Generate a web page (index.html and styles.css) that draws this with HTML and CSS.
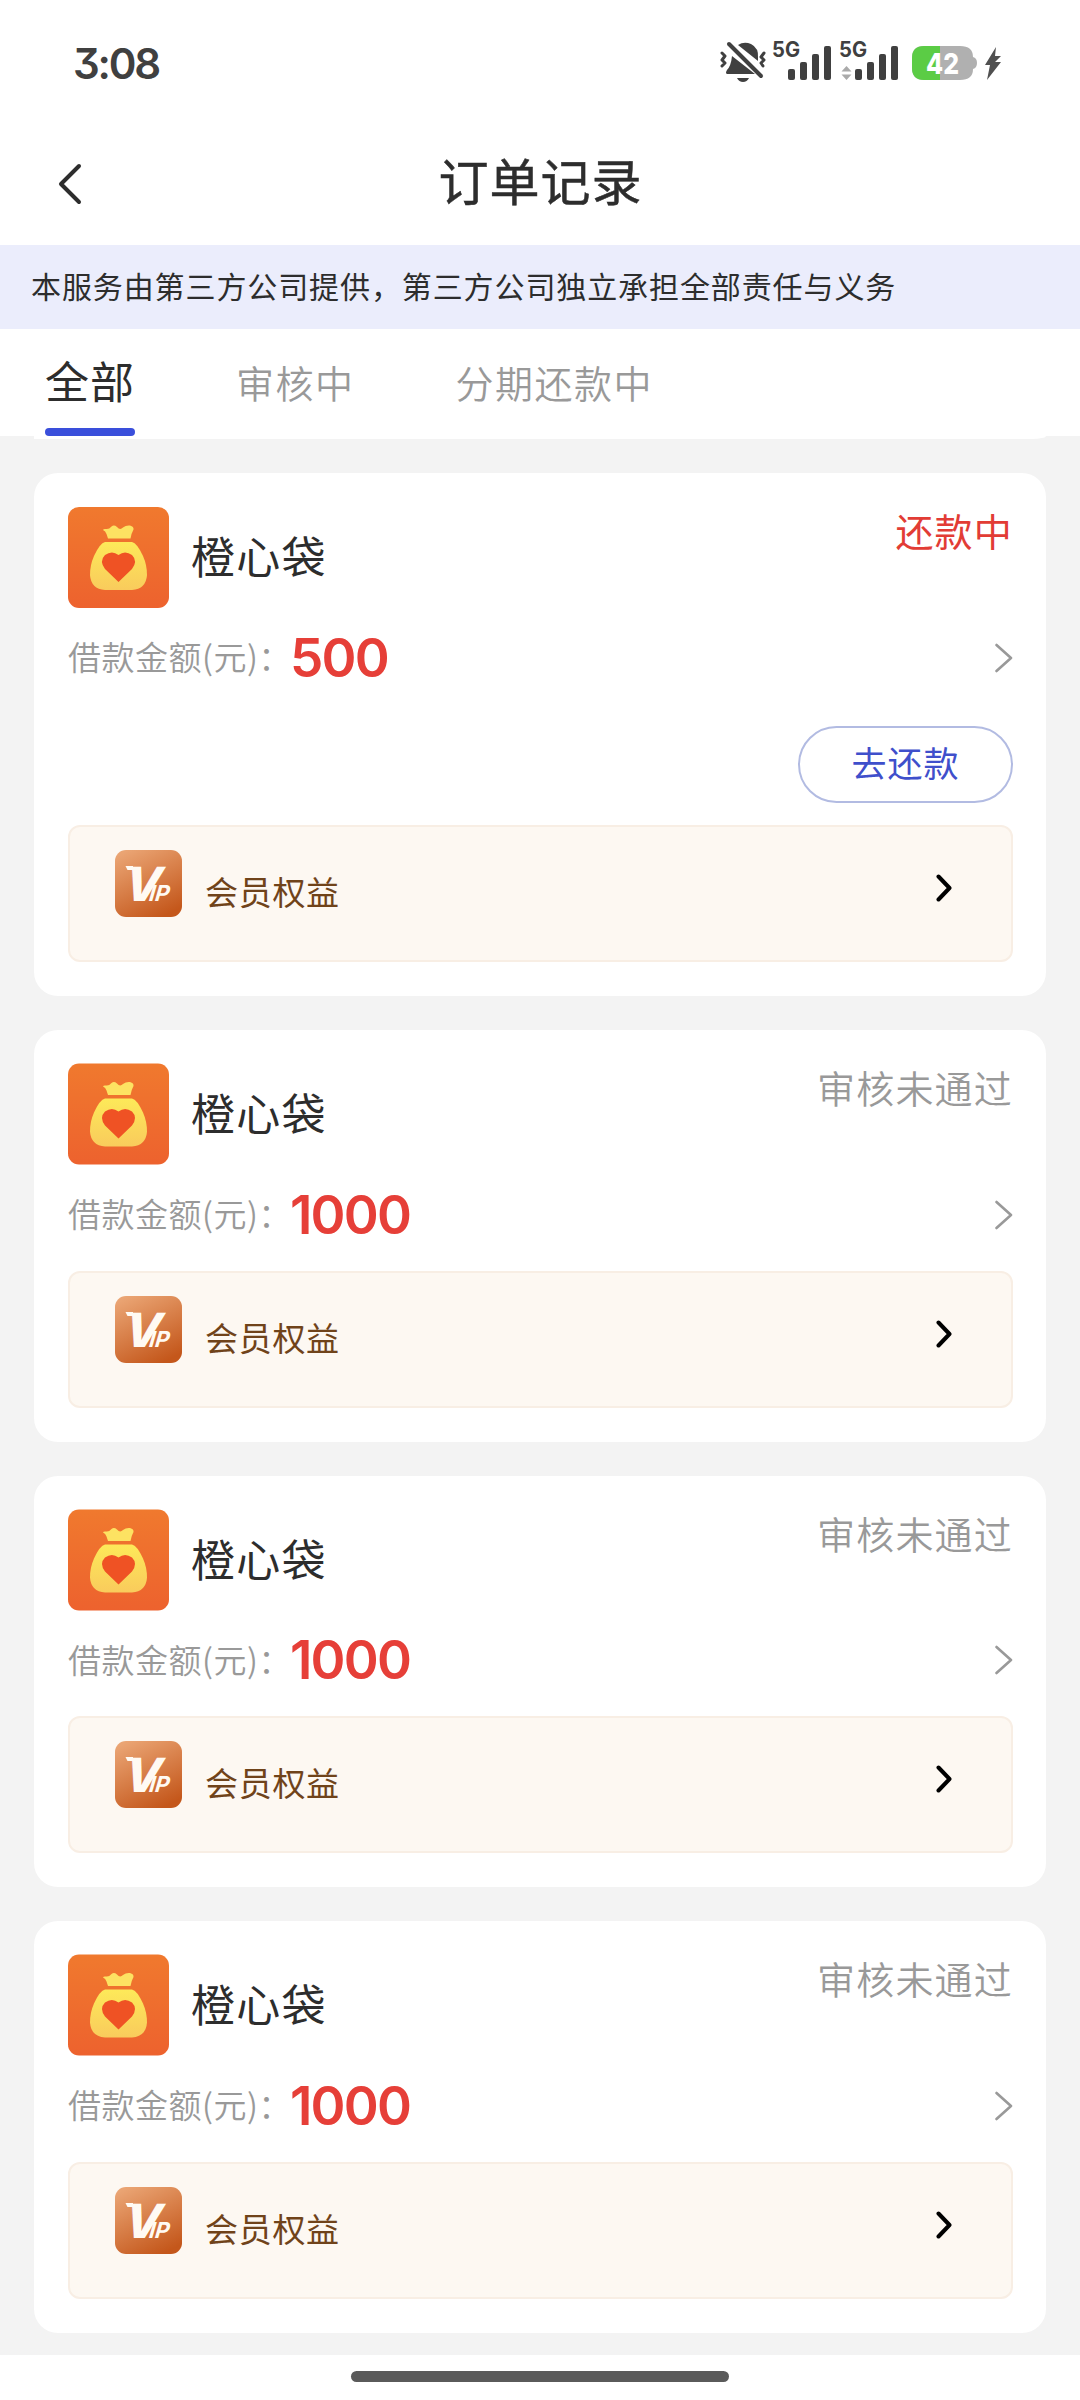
FILE: index.html
```html
<!DOCTYPE html>
<html lang="zh-CN">
<head>
<meta charset="utf-8">
<title>订单记录</title>
<link rel="stylesheet" href="styles.css">
</head>
<body>
<svg class="defs" width="0" height="0" aria-hidden="true">
  <defs>
    <linearGradient id="orange" x1="0" y1="0" x2="0" y2="1"><stop offset="0" stop-color="#f0792e"/><stop offset="1" stop-color="#ed622e"/></linearGradient>
    <linearGradient id="gold" x1="0" y1="0" x2="0" y2="1"><stop offset="0" stop-color="#fde959"/><stop offset="1" stop-color="#f9cb5c"/></linearGradient>
    <linearGradient id="bronze" x1="0.2" y1="0" x2="0.7" y2="1"><stop offset="0" stop-color="#eaa473"/><stop offset="1" stop-color="#c4571b"/></linearGradient>
  </defs>
  <symbol id="bag" viewBox="0 0 101 101">
    <rect width="101" height="101" rx="11" fill="url(#orange)"/>
    <path d="M40 31.500 38.500 27 Q37.500 24 35 23 Q35.500 21.500 38 22 Q41 22.500 43.500 19.500 Q46 17.500 49 20 Q52 23.500 55 20.500 Q58 18 62 18.500 Q66 19.500 65.500 22.500 Q63.500 26 62.500 31.500Z" fill="#fde262"/>
    <path d="M37 35H64Q69 36 75 49Q79 58 79 68Q78 82 64 83H37Q23 82 22 68Q22 58 26 49Q32 36 37 35Z" fill="url(#gold)"/>
    <path d="M50.500 75 37 62Q31 54 37 48Q44 43 50.500 48Q57 43 64 48Q70 54 64 62Z" fill="#ef5224"/>
  </symbol>
  <symbol id="next" viewBox="0 0 18 30"><path d="M1.500 2 16 15 1.500 28" fill="none" stroke="#999" stroke-width="2.600" stroke-linecap="round" stroke-linejoin="round"/></symbol>
  <symbol id="more" viewBox="0 0 16 28"><path d="M2.500 2.500 13.500 14 2.500 25.500" fill="none" stroke="#000" stroke-width="4" stroke-linecap="round" stroke-linejoin="round"/></symbol>
  <symbol id="bars" viewBox="0 0 44 34">
    <g fill="#404040"><rect y="23" width="7" height="11" rx="2"/><rect x="12" y="16" width="7" height="18" rx="2"/><rect x="24" y="8" width="7" height="26" rx="2"/><rect x="36" width="7" height="34" rx="2"/></g>
  </symbol>
</svg>

<header class="status-bar">
  <span class="time">3:08</span>
  <svg class="status-icons" viewBox="0 0 290 44" width="290" height="44">
    <g fill="#404040">
      <path d="M18 5Q24 1 31 4Q39 8 38 18V21Z"/>
      <path d="M12 16 35 34H7Q5 33 7 30Q11 26 12 16Z"/>
      <path d="M17 38H29Q27 42 23 42Q19 42 17 38Z"/>
    </g>
    <g fill="none" stroke="#404040" stroke-linecap="round" stroke-linejoin="round">
      <path d="M9 4 41 36" stroke-width="4"/>
      <path d="M2 13 5 16 2 20 5 23 2 26M44 13 41 17 44 20 41 23 43 26" stroke-width="3"/>
    </g>
    <g class="net" fill="#404040"><text x="52" y="17" textLength="28" lengthAdjust="spacingAndGlyphs">5G</text><text x="119" y="17" textLength="28" lengthAdjust="spacingAndGlyphs">5G</text></g>
    <use href="#bars" x="68" y="6" width="44" height="34"/>
    <use href="#bars" x="135" y="6" width="44" height="34"/>
    <path d="M126.500 26 131.500 31.500H121.500ZM126.500 40 131.500 34.500H121.500Z" fill="#aaa"/>
    <path d="M204 6H240Q253 6 253 17Q257 18 257 23Q257 28 253 29Q253 40 240 40H204Q192 40 192 28V18Q192 6 204 6Z" fill="#b0b0b0"/>
    <path d="M220 6H204Q192 6 192 18V28Q192 40 204 40H220Z" fill="#5bcc45"/>
    <text class="level" x="206" y="33.500" textLength="33" lengthAdjust="spacingAndGlyphs">42</text>
    <path d="M276 7 265 25H270L267 40 281 22H275L281 16H275Z" fill="#505050"/>
  </svg>
</header>

<nav class="title-bar">
  <svg class="back" viewBox="0 0 24 40" width="24" height="40"><path d="M21 2 3 20 21 38" fill="none" stroke="#2d2d2d" stroke-width="4" stroke-linecap="round" stroke-linejoin="round"/></svg>
  <h1>订单记录</h1>
</nav>

<p class="notice">本服务由第三方公司提供，第三方公司独立承担全部责任与义务</p>

<div class="tabs">
  <span class="tab active">全部</span>
  <span class="tab">审核中</span>
  <span class="tab">分期还款中</span>
</div>

<main class="orders">
  <div class="scrolled-card"></div>
  <section class="card">
    <div class="card-head"><svg class="logo"><use href="#bag"/></svg><h2>橙心袋</h2><span class="state due">还款中</span></div>
    <div class="amount"><span class="label">借款金额(元)：</span><b>500</b><svg class="next"><use href="#next"/></svg></div>
    <div class="actions"><button>去还款</button></div>
    <div class="benefit"><svg class="vip" viewBox="0 0 67 67"><rect width="67" height="67" rx="11" fill="url(#bronze)"/><path d="M10.500 16H18V20H12.500Z"/><text x="14.500" y="51" transform="skewX(-7)"><tspan class="v">V</tspan><tspan class="ip">IP</tspan></text></svg><span>会员权益</span><svg class="more"><use href="#more"/></svg></div>
  </section>
  <section class="card">
    <div class="card-head"><svg class="logo"><use href="#bag"/></svg><h2>橙心袋</h2><span class="state">审核未通过</span></div>
    <div class="amount"><span class="label">借款金额(元)：</span><b>1000</b><svg class="next"><use href="#next"/></svg></div>
    <div class="benefit"><svg class="vip" viewBox="0 0 67 67"><rect width="67" height="67" rx="11" fill="url(#bronze)"/><path d="M10.500 16H18V20H12.500Z"/><text x="14.500" y="51" transform="skewX(-7)"><tspan class="v">V</tspan><tspan class="ip">IP</tspan></text></svg><span>会员权益</span><svg class="more"><use href="#more"/></svg></div>
  </section>
  <section class="card">
    <div class="card-head"><svg class="logo"><use href="#bag"/></svg><h2>橙心袋</h2><span class="state">审核未通过</span></div>
    <div class="amount"><span class="label">借款金额(元)：</span><b>1000</b><svg class="next"><use href="#next"/></svg></div>
    <div class="benefit"><svg class="vip" viewBox="0 0 67 67"><rect width="67" height="67" rx="11" fill="url(#bronze)"/><path d="M10.500 16H18V20H12.500Z"/><text x="14.500" y="51" transform="skewX(-7)"><tspan class="v">V</tspan><tspan class="ip">IP</tspan></text></svg><span>会员权益</span><svg class="more"><use href="#more"/></svg></div>
  </section>
  <section class="card">
    <div class="card-head"><svg class="logo"><use href="#bag"/></svg><h2>橙心袋</h2><span class="state">审核未通过</span></div>
    <div class="amount"><span class="label">借款金额(元)：</span><b>1000</b><svg class="next"><use href="#next"/></svg></div>
    <div class="benefit"><svg class="vip" viewBox="0 0 67 67"><rect width="67" height="67" rx="11" fill="url(#bronze)"/><path d="M10.500 16H18V20H12.500Z"/><text x="14.500" y="51" transform="skewX(-7)"><tspan class="v">V</tspan><tspan class="ip">IP</tspan></text></svg><span>会员权益</span><svg class="more"><use href="#more"/></svg></div>
  </section>
</main>
<footer class="home-bar"><i></i></footer>
</body>
</html>
```
FILE: styles.css
```css
* { box-sizing: border-box; margin: 0; padding: 0; }
body {
  width: 1080px;
  height: 2400px;
  overflow: hidden;
  display: flex;
  flex-direction: column;
  background: #fff;
  color: #2d2d2d;
  font-family: "Noto Sans CJK SC", sans-serif;
}
svg { display: block; flex: none; overflow: visible; }
.defs { position: absolute; }

.status-bar {
  height: 124px;
  padding: 2px 70px 0 73px;
  display: flex;
  align-items: center;
  justify-content: space-between;
}
.status-icons { margin-top: -2px; }
.time {
  font: 600 42px Inter, sans-serif;
  font-feature-settings: "cv09";
  letter-spacing: -2.2px;
  color: #404040;
}
.net { font: 700 21px Inter, sans-serif; }
.level { font: 800 29px Inter, sans-serif; fill: #fff; }

.title-bar {
  height: 121px;
  padding: 0 58px;
  display: grid;
  grid-template-columns: 24px 1fr 24px;
  align-items: center;
}
.back { margin-top: -2px; }
.title-bar h1 {
  padding: 0 0 11px 1px;
  text-align: center;
  font-size: 50px;
  line-height: 60px;
  font-weight: 400;
  letter-spacing: 1px;
  -webkit-text-stroke: 0.5px;
}

.notice {
  height: 84px;
  padding-left: 31px;
  background: #ebedfc;
  font-size: 30px;
  line-height: 81px;
  letter-spacing: 0.9px;
  white-space: nowrap;
}

.tabs { height: 107px; padding-left: 45px; display: flex; gap: 101px; }
.tab { font-size: 38px; line-height: 105px; letter-spacing: 1.5px; color: #999; font-weight: 350; white-space: nowrap; }
.tab.active {
  display: flex;
  flex-direction: column;
  justify-content: space-between;
  padding-top: 3px;
  font-size: 44px;
  line-height: 96px;
  letter-spacing: 1px;
  font-weight: 400;
  color: #2d2d2d;
}
.tab.active::after { content: ""; height: 8px; border-radius: 4px; background: #3a4fdb; flex: none; }

.orders {
  height: 1919px;
  padding: 0 34px;
  background: #f3f3f3;
  overflow: hidden;
  display: flex;
  flex-direction: column;
  gap: 34px;
}
.scrolled-card { height: 3px; background: #fff; border-radius: 0 0 14px 0 / 0 0 3px 0; flex: none; }
.card { flex: none; padding: 34px 33px 34px 34px; border-radius: 24px; background: #fff; }
.card-head { height: 101px; display: flex; align-items: flex-start; }
.logo { width: 101px; height: 101px; }
.card + .card .logo { height: 102px; margin-top: -1px; }
.card-head h2 { flex: 1; margin-left: 22px; font-size: 44px; line-height: 96px; font-weight: 400; letter-spacing: 1.3px; }
.state { margin-top: -5px; font-size: 38px; line-height: 56px; letter-spacing: 1.2px; color: #999; font-weight: 350; }
.state.due { color: #e23c35; font-weight: 400; }

.amount { height: 98px; padding-top: 1px; display: flex; align-items: center; }
.label { width: 222px; padding-bottom: 3px; font-size: 33px; letter-spacing: 0.5px; color: #999; white-space: nowrap; font-weight: 350; }
.amount b { font: 600 53px Inter, sans-serif; color: #e63f38; letter-spacing: -1.8px; }
.next { width: 18px; height: 30px; margin-left: auto; }

.actions { height: 119px; padding-top: 20px; display: flex; justify-content: flex-end; }
.actions button {
  width: 215px;
  height: 77px;
  padding-bottom: 7px;
  border: 2px solid #b2bbe2;
  border-radius: 39px;
  background: #fff;
  color: #3f4fcb;
  font: 400 35px "Noto Sans CJK SC", sans-serif;
  letter-spacing: 1px;
}
.benefit {
  height: 137px;
  padding: 23px 59px 0 45px;
  display: flex;
  align-items: flex-start;
  border: 2px solid #f8eee4;
  border-radius: 12px;
  background: #fdf8f2;
}
.amount + .benefit { margin-top: 7.6px; }
.vip { width: 67px; height: 67px; }
.vip path, .vip text { fill: #fffaf3; }
.vip .v { font: italic 800 47px Inter, sans-serif; letter-spacing: -11px; }
.vip .ip { font: italic 700 22px Inter, sans-serif; }
.benefit span { margin: 16px 0 0 23px; font-size: 33px; line-height: 50px; letter-spacing: 0.7px; color: #70431a; }
.more { width: 16px; height: 28px; margin: 24px 0 0 auto; }

.home-bar { height: 45px; padding-top: 16px; background: #fff; }
.home-bar i { display: block; width: 378px; height: 11px; margin: 0 auto; border-radius: 6px; background: #5a5a5a; }
```
